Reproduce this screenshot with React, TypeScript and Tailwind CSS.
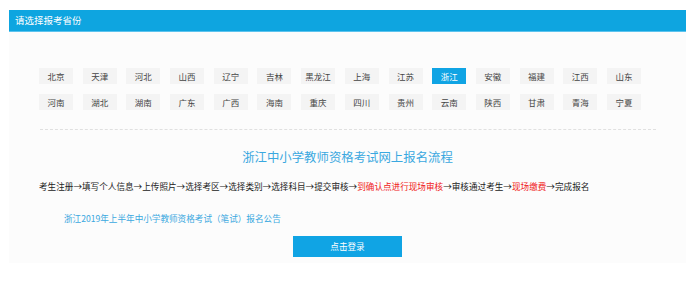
const rows = [
  ['北京', '天津', '河北', '山西', '辽宁', '吉林', '黑龙江', '上海', '江苏', '浙江', '安徽', '福建', '江西', '山东'],
  ['河南', '湖北', '湖南', '广东', '广西', '海南', '重庆', '四川', '贵州', '云南', '陕西', '甘肃', '青海', '宁夏'],
];

const steps: { text: string; red?: boolean }[] = [
  { text: '考生注册' },
  { text: '填写个人信息' },
  { text: '上传照片' },
  { text: '选择考区' },
  { text: '选择类别' },
  { text: '选择科目' },
  { text: '提交审核' },
  { text: '到确认点进行现场审核', red: true },
  { text: '审核通过考生' },
  { text: '现场缴费', red: true },
  { text: '完成报名' },
];

export default function App() {
  const selected = '浙江';

  return (
    <div className="h-[303px] w-[692px] bg-white pt-[10px] font-['Noto_Sans_CJK_SC','Noto_Sans',sans-serif]">
      <div className="ml-[9px] w-[677px]">
        <div className="flex h-[22px] items-center border-b border-[#5cc3ee] bg-[#0ea5e0] px-[6px] text-[9.5px] text-white">
          请选择报考省份
        </div>
        <div className="h-[231px] bg-[#fcfcfc]">
          <div className="flex flex-col gap-[10px] pl-[30px] pt-[36px]">
            {rows.map((row, i) => (
              <div key={i} className="flex gap-x-[9.7px]">
                {row.map((name) => (
                  <button
                    key={name}
                    type="button"
                    className={
                      name === selected
                        ? 'flex h-[16px] w-[34px] items-center justify-center bg-[#10a4e4] text-[8.5px] text-white'
                        : 'flex h-[16px] w-[34px] items-center justify-center bg-[#f4f4f4] text-[8.5px] text-[#444]'
                    }
                  >
                    {name}
                  </button>
                ))}
              </div>
            ))}
          </div>
          <div className="ml-[31px] mt-[19px] w-[616px] border-t border-dashed border-[#e0e0e0]" />
          <div className="mt-[18px] text-center text-[12.4px] leading-[18px] text-[#3aa8e0]">
            浙江中小学教师资格考试网上报名流程
          </div>
          <div className="mt-[14px] pl-[30px] text-[8.6px] leading-[12px] text-[#222]">
            {steps.map((s, i) => (
              <span key={s.text}>
                {i > 0 ? '→' : ''}
                <span className={s.red ? 'text-[#f02020]' : ''}>{s.text}</span>
              </span>
            ))}
          </div>
          <div className="mt-[20px] pl-[55px] text-[8.6px] leading-[12px] text-[#3aa8e0]">
            浙江2019年上半年中小学教师资格考试（笔试）报名公告
          </div>
          <div className="mt-[12px] flex justify-center">
            <button
              type="button"
              className="flex h-[21px] w-[109px] items-center justify-center bg-[#10a4e4] text-[8.6px] text-white"
            >
              点击登录
            </button>
          </div>
        </div>
      </div>
    </div>
  );
}
